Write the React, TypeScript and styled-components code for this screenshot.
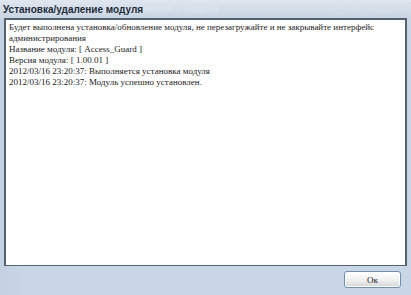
import * as React from 'react';
import styled, { createGlobalStyle } from 'styled-components';

const LOG_LINES = [
  'Будет выполнена установка/обновление модуля, не перезагружайте и не закрывайте интерфейс администрирования',
  'Название модуля: [ Access_Guard ]',
  'Версия модуля: [ 1.00.01 ]',
  '2012/03/16 23:20:37: Выполняется установка модуля',
  '2012/03/16 23:20:37: Модуль успешно установлен.',
];

export default function App() {
  return (
    <>
      <GlobalStyle />
      <Dialog>
        <TitleBar>
          <Ghost>Главная &gt; Сервер приложений &gt; Модули</Ghost>
          <GhostRight>
            <svg width="12" height="12" viewBox="0 0 13 13">
              <circle cx="6.5" cy="6.5" r="5.5" fill="none" stroke="#d6dee8" strokeWidth="1.2" />
              <path d="M4.8 5 A1.8 1.8 0 1 1 6.5 7 L6.5 8.2 M6.5 9.6 L6.5 10.4" fill="none" stroke="#d6dee8" strokeWidth="1.1" />
            </svg>
            <span>Справка</span>
            <svg width="16" height="14" viewBox="0 0 16 14" style={{ marginLeft: 10 }}>
              <path d="M8 13 L2 7 A3.2 3.2 0 0 1 8 3 A3.2 3.2 0 0 1 14 7 Z" fill="none" stroke="#d6dee8" strokeWidth="1.3" />
            </svg>
          </GhostRight>
          <Title>Установка/удаление модуля</Title>
        </TitleBar>
        <LogBox>
          {LOG_LINES.map(line => (
            <LogLine key={line}>{line}</LogLine>
          ))}
        </LogBox>
        <Footer>
          <OkButton>Ок</OkButton>
        </Footer>
      </Dialog>
    </>
  );
}

const GlobalStyle = createGlobalStyle`
  html, body {
    margin: 0;
    padding: 0;
    background: #c7d5e5;
  }
`;

const Dialog = styled.div`
  width: 411px;
  height: 295px;
  display: flex;
  flex-direction: column;
  background: linear-gradient(to right, #c3d1e2 0px, #c8d6e6 30px, #c8d6e6 100%);
  overflow: hidden;
`;

const TitleBar = styled.div`
  position: relative;
  height: 18px;
  flex: none;
  background: linear-gradient(to bottom, #dfe6ee 0%, #c9d5e2 100%);
  display: flex;
  align-items: center;
  padding-left: 3px;
`;

const Ghost = styled.div`
  position: absolute;
  left: 36px;
  top: 3px;
  font: 9.5px 'Liberation Sans', sans-serif;
  color: #dfe6ee;
  white-space: nowrap;
`;

const GhostRight = styled.div`
  position: absolute;
  left: 334px;
  top: 2px;
  display: flex;
  align-items: center;
  gap: 3px;
  font: 10px 'DejaVu Sans', sans-serif;
  color: #d6dee8;
  white-space: nowrap;
`;

const Title = styled.div`
  position: relative;
  font: bold 10px 'Liberation Sans', sans-serif;
  color: #1e2b3a;
  white-space: nowrap;
`;

const LogBox = styled.div`
  flex: none;
  height: 248px;
  margin: 0 4px;
  background: #ffffff;
  border: 1px solid #56636f;
  border-top-width: 2px;
  border-left-width: 2px;
  border-right-width: 2px;
  padding: 2px 3px;
  box-sizing: border-box;
`;

const LogLine = styled.div`
  font: 9px 'Liberation Serif', serif;
  line-height: 11px;
  color: #1c1c1c;
`;

const Footer = styled.div`
  flex: 1;
  display: flex;
  justify-content: flex-end;
  align-items: flex-start;
  padding: 5px 10px 0 0;
`;

const OkButton = styled.button`
  width: 57px;
  height: 17px;
  padding: 0;
  border: 1px solid #6f8fb2;
  border-radius: 3px;
  background: linear-gradient(to bottom, #ffffff 0%, #f0f0f0 55%, #d4d4d4 100%);
  font: 9px 'Liberation Serif', serif;
  color: #222;
  box-shadow: inset 0 0 0 1px #ffffff;
`;
